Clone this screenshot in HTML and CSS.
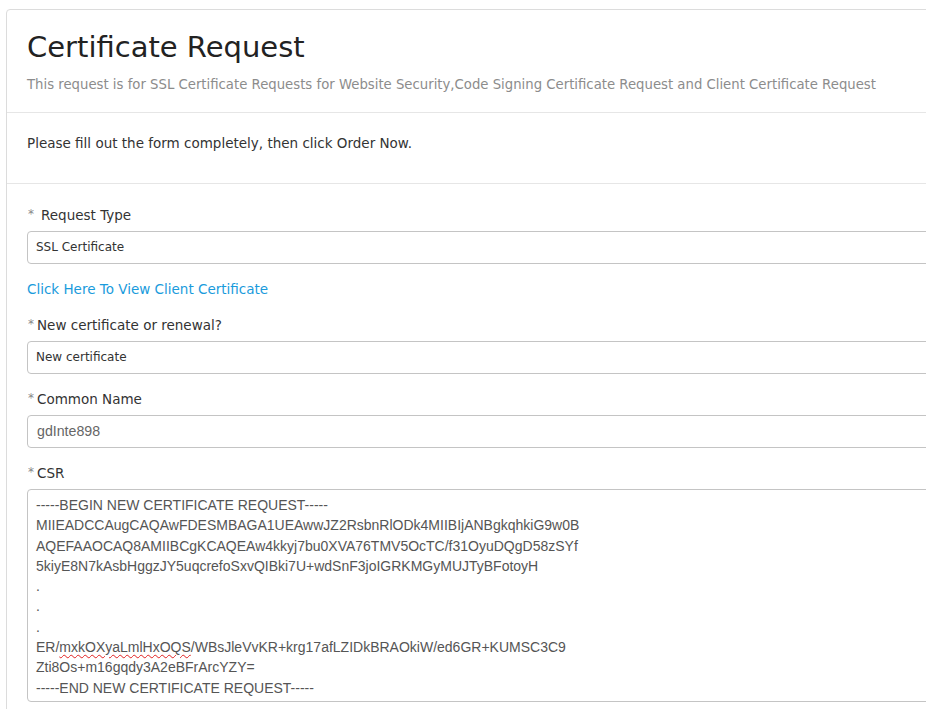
FILE: index.html
```html
<!DOCTYPE html>
<html lang="en">
<head>
<meta charset="utf-8">
<title>Certificate Request</title>
<link rel="stylesheet" href="styles.css">
</head>
<body>
<div class="page">
  <div class="card">
    <div class="card-head">
      <h1 class="title">Certificate Request</h1>
      <p class="subtitle">This request is for SSL Certificate Requests for Website Security,Code Signing Certificate Request and Client Certificate Request</p>
    </div>
    <div class="card-intro">
      <p>Please fill out the form completely, then click Order Now.</p>
    </div>
    <div class="card-body">
      <div class="field">
        <label class="label"><span class="req req-spaced">*</span>Request Type</label>
        <div class="control">SSL Certificate</div>
      </div>
      <a class="link" href="#">Click Here To View Client Certificate</a>
      <div class="field">
        <label class="label"><span class="req">*</span>New certificate or renewal?</label>
        <div class="control">New certificate</div>
      </div>
      <div class="field">
        <label class="label"><span class="req">*</span>Common Name</label>
        <div class="control control-text">gdInte898</div>
      </div>
      <div class="field">
        <label class="label"><span class="req">*</span>CSR</label>
        <div class="textarea">-----BEGIN NEW CERTIFICATE REQUEST-----
MIIEADCCAugCAQAwFDESMBAGA1UEAwwJZ2RsbnRlODk4MIIBIjANBgkqhkiG9w0B
AQEFAAOCAQ8AMIIBCgKCAQEAw4kkyj7bu0XVA76TMV5OcTC/f31OyuDQgD58zSYf
5kiyE8N7kAsbHggzJY5uqcrefoSxvQIBki7U+wdSnF3joIGRKMGyMUJTyBFotoyH
.
.
.
ER/<span class="spell">mxkOXyaLmlHxOQS</span>/WBsJleVvKR+krg17afLZIDkBRAOkiW/ed6GR+KUMSC3C9
Zti8Os+m16gqdy3A2eBFrArcYZY=
-----END NEW CERTIFICATE REQUEST-----</div>
      </div>
    </div>
  </div>
</div>
</body>
</html>
```
FILE: styles.css
```css
html, body {
  margin: 0;
  padding: 0;
  background: #ffffff;
  overflow: hidden;
}
body {
  font-family: "DejaVu Sans", "Liberation Sans", sans-serif;
  color: #333333;
}
.page {
  padding: 9px 0 0 6px;
}
.card {
  width: 1000px;
  border: 1px solid #dcdcdc;
  border-radius: 4px;
  background: #fff;
}
.card-head {
  padding: 19px 20px 0 20px;
  height: 83px;
  border-bottom: 1px solid #e6e6e6;
}
.title {
  margin: 0;
  font-size: 29px;
  line-height: 36px;
  font-weight: normal;
  color: #222;
}
.subtitle {
  margin: 10px 0 0 0;
  font-size: 13.25px;
  line-height: 20px;
  color: #8c8c8c;
}
.card-intro {
  padding: 20px 20px 30px 20px;
  border-bottom: 1px solid #e6e6e6;
}
.card-intro p {
  margin: 0;
  font-size: 13.5px;
  line-height: 20px;
  color: #333;
}
.card-body {
  padding: 20px 20px 20px 20px;
  display: flex;
  flex-direction: column;
}
.field {
  display: flex;
  flex-direction: column;
  margin-bottom: 14px;
}
.label {
  font-size: 13.5px;
  line-height: 20px;
  color: #333;
  margin-bottom: 6px;
}
.req {
  display: inline-block;
  width: 9px;
  padding-left: 1px;
  color: #888;
  font-size: 12px;
  vertical-align: 2px;
}
.req-spaced {
  width: 13px;
}
.control {
  height: 33px;
  box-sizing: border-box;
  border: 1px solid #c4c4c4;
  border-radius: 4px;
  padding: 0 8px;
  font-size: 12px;
  line-height: 31px;
  color: #333;
}
.control-text {
  font-family: "Liberation Sans", Arial, sans-serif;
  font-size: 14.2px;
  color: #666;
  padding-left: 9px;
}
.link {
  font-size: 13.5px;
  line-height: 20px;
  color: #1a9bdc;
  text-decoration: none;
  margin: 1px 0 15px 0;
  align-self: flex-start;
}
.textarea {
  box-sizing: border-box;
  height: 213px;
  border: 1px solid #c4c4c4;
  border-radius: 4px;
  padding: 5px 8px;
  font-family: "Liberation Sans", Arial, sans-serif;
  font-size: 14px;
  line-height: 20.3px;
  color: #555;
  white-space: pre;
  overflow: hidden;
}
.spell {
  text-decoration: underline wavy #e02020;
  text-decoration-thickness: 1px;
  text-underline-offset: 2px;
}
```
